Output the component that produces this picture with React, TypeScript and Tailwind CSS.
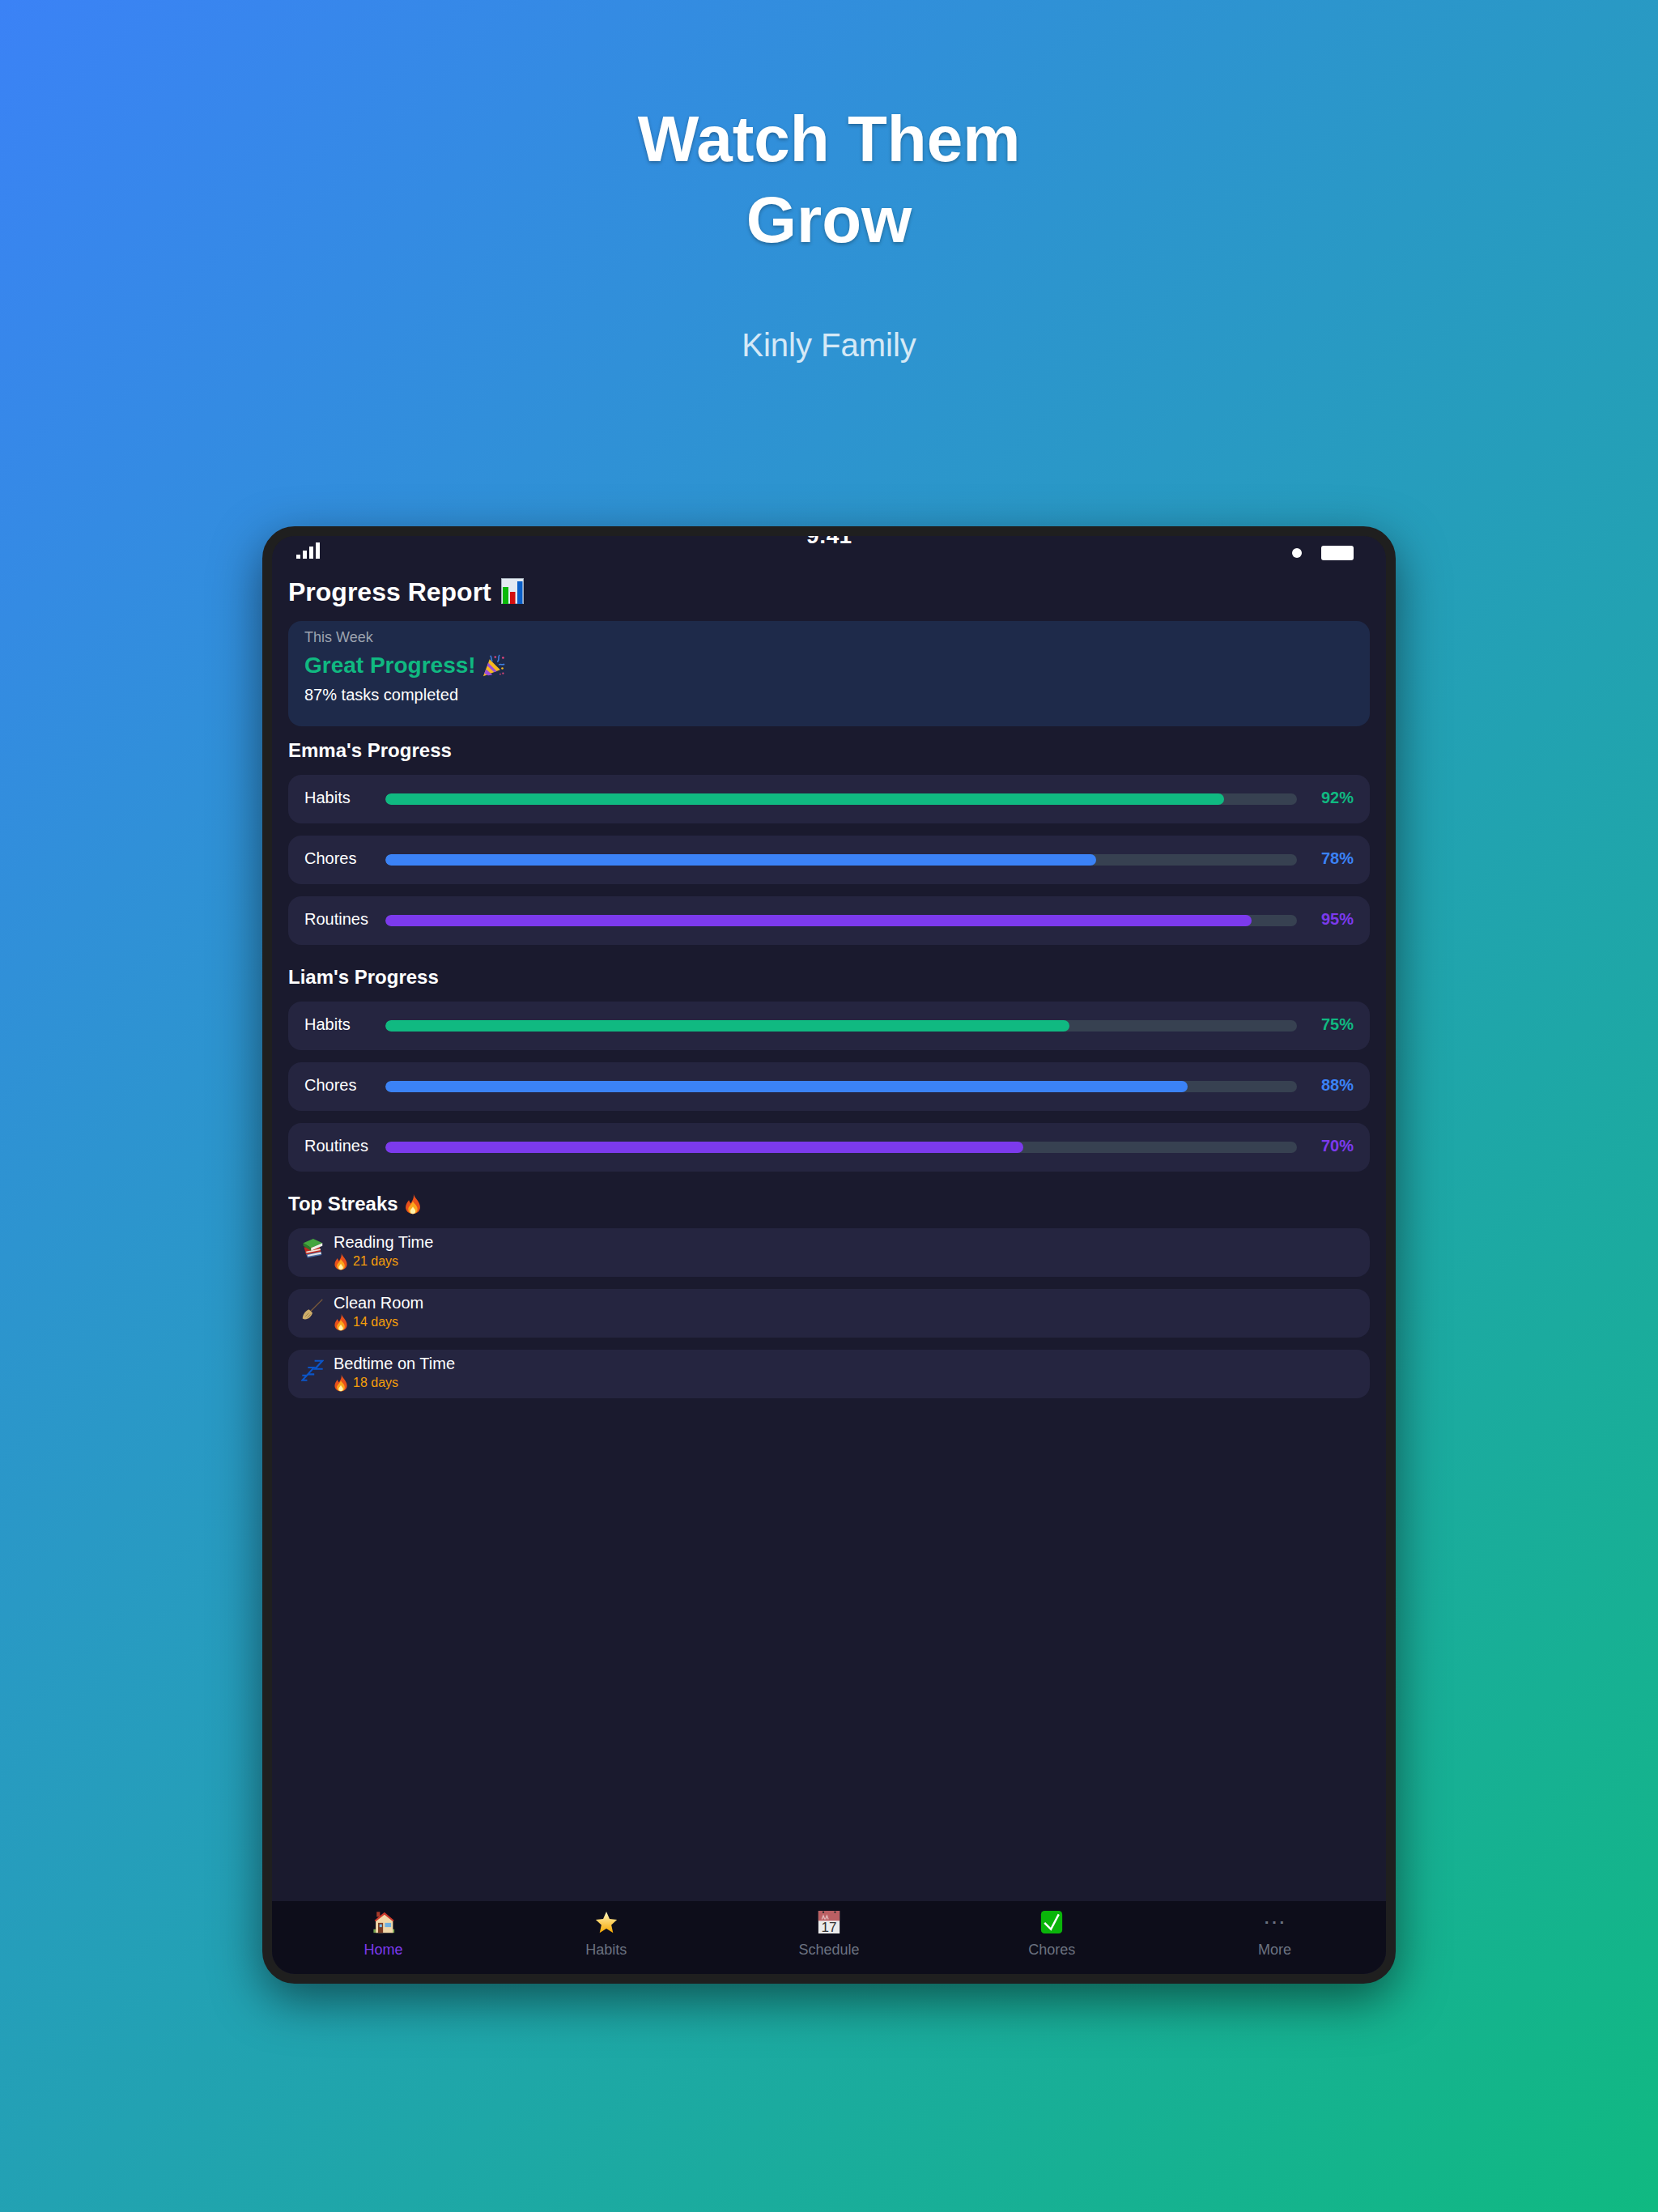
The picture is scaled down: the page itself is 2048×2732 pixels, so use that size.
const font = { fontFamily: '"Liberation Sans", Arial, sans-serif' };

const IconChart = ({ size = 32 }: { size?: number }) => (
  <svg width={size} height={size} viewBox="0 0 32 32" className="-mt-[2px]">
    <rect x="2.500" y="0.500" width="27" height="31" fill="#e3eaf2" stroke="#a3adb8" />
    <rect x="4" y="11" width="7" height="21" fill="#0cb80c" />
    <rect x="13" y="17" width="6.500" height="15" fill="#d40f0f" />
    <rect x="22" y="4" width="6.500" height="28" fill="#0a5fc8" />
  </svg>
);

const IconParty = ({ size = 28 }: { size?: number }) => (
  <svg width={size} height={size} viewBox="0 0 32 32">
    <path d="M1 31 L10 7 L25 22 Z" fill="#f5b81f" />
    <path d="M5 21 L14 29 L8 30 L2.500 27 Z" fill="#9b4fd8" />
    <path d="M8 12 L20 24 L16.500 25.500 L6.500 16 Z" fill="#9b4fd8" />
    <path d="M11 2 C14 5 11 7 14 10 M24 1 C21 5 25 7 21 11 M23 15 C26 13 28 16 31 14" fill="none" stroke="#3f7fe0" strokeWidth="1.800" />
    <circle cx="18" cy="4" r="1.500" fill="#e0457b" />
    <circle cx="29" cy="5" r="1.500" fill="#e0457b" />
    <circle cx="28" cy="20" r="1.500" fill="#f5b81f" />
    <circle cx="29" cy="27" r="1.300" fill="#e0457b" />
    <circle cx="25" cy="28" r="1" fill="#e0457b" />
  </svg>
);

const IconFire = ({ size = 16 }: { size?: number }) => (
  <svg width={size} height={size} viewBox="0 0 32 32">
    <path d="M17 1 C19 8 27 12 27 21 C27 27 22 31 16 31 C10 31 5 27 5 21 C5 16 8 13 10 10 C11 13 12 14 13 15 C15 11 18 7 17 1 Z" fill="#e8501a" />
    <path d="M16 12 C18 16 23 18 23 24 C23 28 20 31 16 31 C12 31 9 28 9 24 C9 20 13 18 16 12 Z" fill="#fba51c" />
    <path d="M16 20 C17 23 20 24 20 27 C20 29.500 18 31 16 31 C14 31 12 29.500 12 27 C12 24 15 23 16 20 Z" fill="#fff1a8" />
  </svg>
);

const IconBooks = () => (
  <svg width="28" height="28" viewBox="0 0 32 32">
    <path d="M6 20 L27 17 L29 24 L9 28 Z" fill="#4a6fa8" />
    <path d="M9 24 L28 20 L28.500 22.500 L9.500 26 Z" fill="#e6e6e6" />
    <path d="M4 13 L26 12 L28 19 L7 23 Z" fill="#c02a20" />
    <path d="M7 19 L27 15 L27.500 17 L7.500 21 Z" fill="#eee4d8" />
    <path d="M3 7 L17 1 L30 7 L14 14 Z" fill="#45a63f" />
    <path d="M3 7 L14 14 L14 18 L3 11 Z" fill="#2d7a2b" />
    <path d="M14 14 L30 7 L30 11 L14 18 Z" fill="#f0f0e8" />
  </svg>
);

const IconBroom = () => (
  <svg width="28" height="28" viewBox="0 0 32 32">
    <path d="M30 1 L13 18" stroke="#7a5a3a" strokeWidth="1.600" />
    <path d="M11 15 L16 20 C14 27 7 31 2 28 C2 22 6 17 11 15 Z" fill="#cfae6b" />
    <path d="M6 25 L11 20 M9 27 L13 22" stroke="#96793f" strokeWidth="1" />
  </svg>
);

const IconZzz = () => (
  <svg width="28" height="28" viewBox="0 0 32 32" fill="none" stroke="#0b55c8" strokeWidth="2.400">
    <path d="M1.500 22.500 H8 L1.500 29.500 H8.500" />
    <path d="M9.500 11.500 H18 L9.500 21 H18.500" />
    <path d="M19 2 H30 L19.500 13.500 H30.500" />
  </svg>
);

const IconHouse = () => (
  <svg width="28" height="28" viewBox="0 0 32 32">
    <rect x="1.600" y="26" width="4.400" height="5" fill="#6fa04a" />
    <rect x="27" y="26" width="4" height="5" fill="#6fa04a" />
    <rect x="6" y="1.500" width="4.700" height="7" fill="#a83a2a" />
    <path d="M4.700 13 L17 4 L29 13 V31 H4.700 Z" fill="#f2d8a8" />
    <path d="M3 13.500 L17 2 L30.500 13.500 L29 15 L17 5.500 L4.500 15 Z" fill="#c9392c" />
    <rect x="8" y="17" width="7" height="14" fill="#7a3b22" />
    <rect x="10" y="19" width="3.500" height="4" fill="#7cc0e8" />
    <rect x="17.600" y="17" width="8.800" height="6" fill="#6fb0e0" />
  </svg>
);

const IconStar = () => (
  <svg width="28" height="28" viewBox="0 0 32 32">
    <defs>
      <linearGradient id="star" x1="0" y1="0" x2="0" y2="1">
        <stop offset="0" stopColor="#fff6c0" />
        <stop offset="1" stopColor="#f6a800" />
      </linearGradient>
    </defs>
    <path d="M16 1 L20.500 11.500 L31 12.500 L23 20 L25.500 31 L16 25 L6.500 31 L9 20 L1 12.500 L11.500 11.500 Z" fill="url(#star)" />
  </svg>
);

const IconCalendar = () => (
  <svg width="28" height="28" viewBox="0 0 32 32" className="overflow-visible">
    <rect x="1" y="0" width="30" height="32" fill="#ebebeb" />
    <rect x="1" y="0" width="30" height="14" fill="#bb5f63" />
    <path d="M6 12 L8 7 L10 12 M11 12 L13 7 L15 12" fill="none" stroke="#e3bcbd" strokeWidth="1.500" />
    <circle cx="8" cy="2" r="1.300" fill="#2a2a2a" />
    <circle cx="24.500" cy="2" r="1.300" fill="#2a2a2a" />
    <text x="16" y="30" textAnchor="middle" fontSize="19.500" fill="#333" style={font}>17</text>
  </svg>
);

const IconCheck = () => (
  <svg width="28" height="28" viewBox="0 0 32 32">
    <rect x="1" y="0" width="30" height="32" rx="5" fill="#0ab40a" />
    <path d="M6 17 L15 26 L26 5" fill="none" stroke="#fff" strokeWidth="2.800" />
  </svg>
);

const ProgressRow = ({ label, value, bar, text }: { label: string; value: number; bar: string; text: string }) => (
  <div className="flex h-[60px] items-center rounded-2xl bg-[#252540] px-5">
    <span className="mb-1 w-[100px] text-[20px] leading-[23px] text-white">{label}</span>
    <div className="h-[14px] flex-1 overflow-hidden rounded-lg bg-[#374151]">
      <div className={`h-full rounded-lg ${bar}`} style={{ width: `${value}%` }} />
    </div>
    <span className={`mb-1 ml-[30px] w-10 text-right text-[20px] leading-[23px] font-bold ${text}`}>{value}%</span>
  </div>
);

const ProgressGroup = ({ name, values }: { name: string; values: number[] }) => (
  <div>
    <h2 className="text-[24px] leading-[30px] font-bold text-white">{name}'s Progress</h2>
    <div className="mt-[15px] flex flex-col gap-[15px]">
      <ProgressRow label="Habits" value={values[0]} bar="bg-[#10b981]" text="text-[#10b981]" />
      <ProgressRow label="Chores" value={values[1]} bar="bg-[#3b82f6]" text="text-[#3b82f6]" />
      <ProgressRow label="Routines" value={values[2]} bar="bg-[#7c3aed]" text="text-[#7c3aed]" />
    </div>
  </div>
);

const StreakRow = ({ icon, title, days }: { icon: React.ReactNode; title: string; days: number }) => (
  <div className="flex h-[60px] items-start rounded-2xl bg-[#252540] pt-[6px] pl-4">
    <div className="mt-[6px] mr-3 w-[28px]">{icon}</div>
    <div>
      <div className="text-[20px] leading-[23px] text-white">{title}</div>
      <div className="mt-[1px] -ml-[2px] flex items-center gap-1 text-[16px] leading-[22px] text-[#f59e0b]">
        <IconFire size={22} />
        {days} days
      </div>
    </div>
  </div>
);

const NavItem = ({ icon, label, active }: { icon: React.ReactNode; label: string; active?: boolean }) => (
  <div className="flex flex-col items-center pt-3">
    <div className="flex h-[28px] items-center justify-center">{icon}</div>
    <span className={`mt-[10px] text-[18px] leading-[21px] ${active ? 'text-[#7c3aed]' : 'text-[#6b7280]'}`}>{label}</span>
  </div>
);

export default function App() {
  return (
    <div style={font} className="h-[2732px] w-[2048px] overflow-hidden bg-[linear-gradient(135deg,#3b82f6_0%,#10b981_100%)] pt-[122px]">
      <h1 className="text-center text-[80px] leading-[100px] font-bold text-white [text-shadow:0_2px_4px_rgba(0,0,0,0.3)]">
        Watch Them
        <br />
        Grow
      </h1>
      <p className="mt-[80px] text-center text-[40px] leading-[48px] text-white/80">Kinly Family</p>

      <div className="mx-auto mt-[200px] h-[1800px] w-[1400px] rounded-[40px] border-12 border-[#1f1f1f] bg-[#1a1a2e] shadow-[0_20px_60px_rgba(0,0,0,0.5)]">
        <div className="flex h-full flex-col overflow-hidden rounded-[28px]">
          <div className="relative flex h-[40px] items-start justify-between pr-10 pl-[30px]">
            <div className="mt-2 flex h-[20px] items-end gap-[3px]">
              <div className="h-[5px] w-[5px] bg-white" />
              <div className="h-[10px] w-[5px] bg-white" />
              <div className="h-[15px] w-[5px] bg-white" />
              <div className="h-[20px] w-[5px] bg-white" />
            </div>
            <span className="absolute top-[-16px] left-0 w-full text-center text-[28px] leading-[32px] font-bold text-white">9:41</span>
            <div className="mt-3 flex items-center gap-6">
              <div className="h-3 w-3 rounded-full bg-white" />
              <div className="h-[18px] w-10 rounded-[3px] bg-white" />
            </div>
          </div>

          <div className="flex-1 px-5">
            <h1 className="mt-[9px] flex h-[40px] items-center gap-[10px] text-[32px] font-bold text-white">
              Progress Report <IconChart size={32} />
            </h1>
            <div className="mt-[16px] h-[130px] rounded-2xl bg-[#1e2a4a] px-5 pt-[9px]">
              <div className="text-[18px] leading-[22px] text-[#9ca3af]">This Week</div>
              <div className="mt-[6px] flex items-center gap-2 text-[28px] leading-[36px] font-bold text-[#10b981]">
                Great Progress! <IconParty />
              </div>
              <div className="mt-[6px] text-[20px] leading-[24px] text-white">87% tasks completed</div>
            </div>

            <div className="mt-[15px]">
              <ProgressGroup name="Emma" values={[92, 78, 95]} />
            </div>
            <div className="mt-[25px]">
              <ProgressGroup name="Liam" values={[75, 88, 70]} />
            </div>

            <div className="mt-[25px]">
              <h2 className="flex items-center gap-[5px] text-[24px] leading-[30px] font-bold text-white">
                Top Streaks <IconFire size={26} />
              </h2>
              <div className="mt-[15px] flex flex-col gap-[15px]">
                <StreakRow icon={<IconBooks />} title="Reading Time" days={21} />
                <StreakRow icon={<IconBroom />} title="Clean Room" days={14} />
                <StreakRow icon={<IconZzz />} title="Bedtime on Time" days={18} />
              </div>
            </div>
          </div>

          <div className="grid h-[90px] grid-cols-5 bg-[#0d0d1a]">
            <NavItem icon={<IconHouse />} label="Home" active />
            <NavItem icon={<IconStar />} label="Habits" />
            <NavItem icon={<IconCalendar />} label="Schedule" />
            <NavItem icon={<IconCheck />} label="Chores" />
            <NavItem icon={<span className="text-[28px] leading-[28px] text-[#6b7280]">⋯</span>} label="More" />
          </div>
        </div>
      </div>
    </div>
  );
}
